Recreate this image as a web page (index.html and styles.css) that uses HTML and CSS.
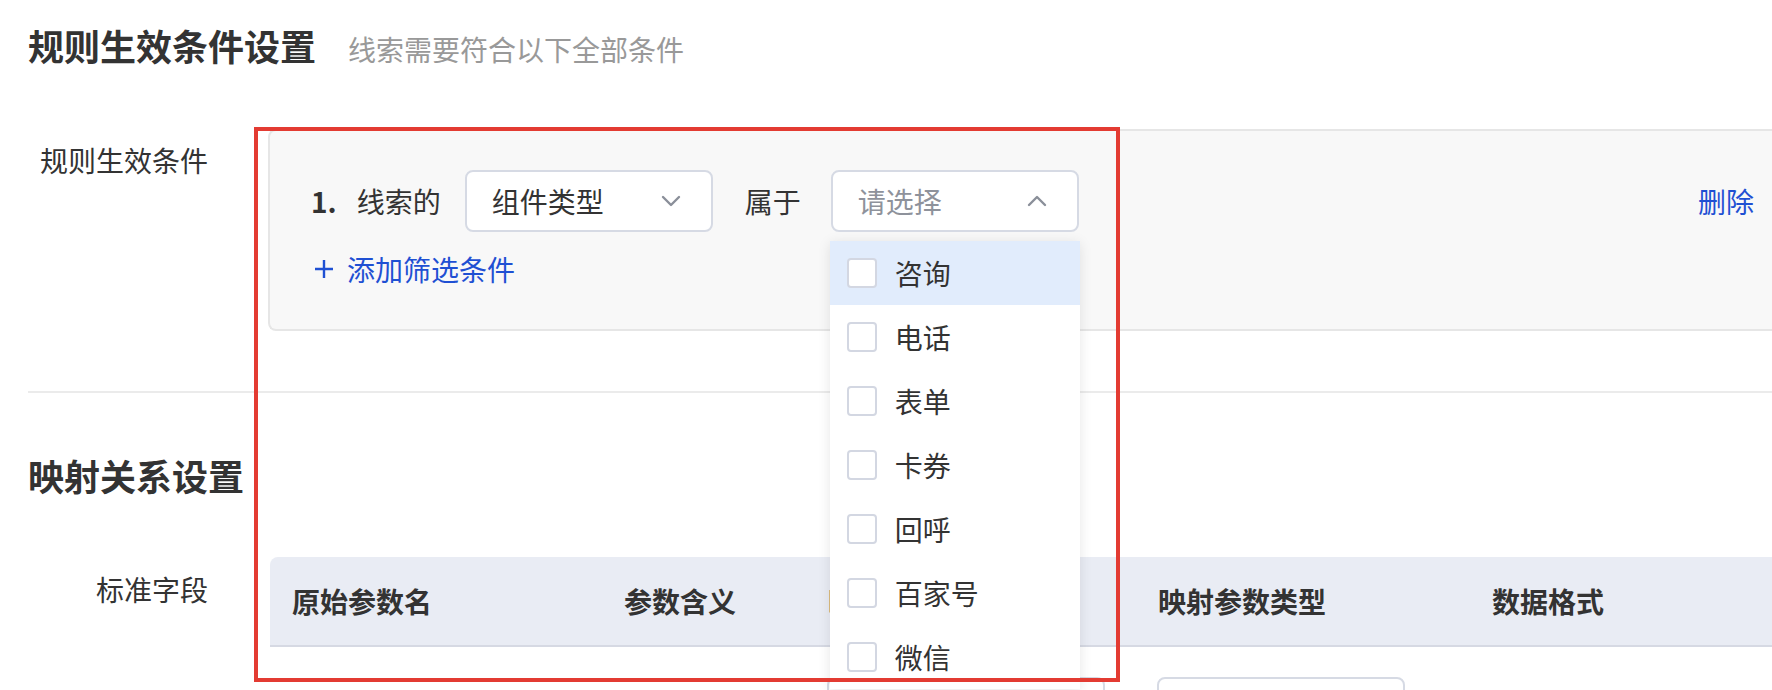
FILE: index.html
```html
<!DOCTYPE html>
<html lang="zh-CN">
<head>
    <meta charset="UTF-8">
    <title>规则生效条件设置</title>
    <link rel="stylesheet" href="styles.css">
</head>
<body>
    <div class="page">
        <!-- 规则生效条件 -->
        <div class="section-head">
            <h2>规则生效条件设置</h2>
            <span class="hint">线索需要符合以下全部条件</span>
        </div>

        <div class="form-row cond-row">
            <div class="form-label">规则生效条件</div>
            <div class="cond-box">
                <div class="cond-line">
                    <span class="cond-no">1.</span>
                    <span class="cond-text first">线索的</span>
                    <div class="select">
                        <span>组件类型</span>
                        <svg class="arrow" width="20" height="12" viewBox="0 0 20 12"><polyline points="2,2 10,10 18,2" fill="none" stroke="#8a8f99" stroke-width="2.4" stroke-linecap="round" stroke-linejoin="round"/></svg>
                    </div>
                    <span class="cond-text">属于</span>
                    <div class="select-wrap">
                        <div class="select open">
                            <span class="placeholder">请选择</span>
                            <svg class="arrow" width="20" height="12" viewBox="0 0 20 12"><polyline points="2,10 10,2 18,10" fill="none" stroke="#8a8f99" stroke-width="2.4" stroke-linecap="round" stroke-linejoin="round"/></svg>
                        </div>
                        <ul class="dropdown">
                            <li class="active"><span class="check"></span>咨询</li>
                            <li><span class="check"></span>电话</li>
                            <li><span class="check"></span>表单</li>
                            <li><span class="check"></span>卡券</li>
                            <li><span class="check"></span>回呼</li>
                            <li><span class="check"></span>百家号</li>
                            <li><span class="check"></span>微信</li>
                        </ul>
                    </div>
                    <a href="#" class="del-link">删除</a>
                </div>
                <a href="#" class="add-link">
                    <svg width="20" height="20" viewBox="0 0 20 20"><path d="M10 1v18M1 10h18" stroke="#1f50d3" stroke-width="2.4"/></svg>
                    添加筛选条件
                </a>
            </div>
        </div>

        <div class="divider"></div>

        <!-- 映射关系设置 -->
        <div class="section-head second">
            <h2>映射关系设置</h2>
        </div>

        <div class="form-row map-row">
            <div class="form-label">标准字段</div>
            <div class="map-table">
                <div class="thead">
                    <div>原始参数名</div>
                    <div>参数含义</div>
                    <div>映射参数名</div>
                    <div>映射参数类型</div>
                    <div>数据格式</div>
                </div>
                <div class="trow">
                    <div></div>
                    <div></div>
                    <div><div class="input wide"></div></div>
                    <div><div class="input"></div></div>
                    <div></div>
                </div>
            </div>
        </div>

        <!-- 标注框 -->
        <div class="mark"></div>
    </div>
</body>
</html>
```

FILE: styles.css
```css
* {
    margin: 0;
    padding: 0;
    box-sizing: border-box;
}

body {
    font-family: "Noto Sans CJK SC", "Noto Sans", sans-serif;
    color: #333;
    background: #fff;
    overflow: hidden;
}

ul {
    list-style: none;
}

a {
    text-decoration: none;
}

.page {
    position: relative;
    width: 1800px;
    height: 690px;
    padding: 20px 0 0 28px;
}

/* Section titles */
.section-head {
    display: flex;
    align-items: baseline;
    height: 50px;
    line-height: 50px;
}

.section-head h2 {
    font-size: 36px;
    font-weight: 700;
    color: #333;
}

.section-head .hint {
    margin-left: 32px;
    font-size: 28px;
    color: #999;
}

.section-head.second {
    margin-top: 57px;
}

/* Form rows */
.form-row {
    display: flex;
    gap: 60px;
}

.form-label {
    flex: 0 0 180px;
    text-align: right;
    font-size: 28px;
    line-height: 40px;
    color: #333;
}

.cond-row {
    margin-top: 59px;
}

.cond-row .form-label {
    padding-top: 11px;
}

.map-row {
    margin-top: 57px;
}

.map-row .form-label {
    padding-top: 12px;
}

/* Condition box */
.cond-box {
    flex: 1;
    background: #f8f8f8;
    border: 2px solid #e6e6e6;
    border-right: none;
    border-radius: 8px 0 0 8px;
    padding: 39px 46px 40px 41px;
}

.cond-line {
    display: flex;
    align-items: center;
    height: 62px;
    font-size: 28px;
}

.cond-no {
    font-weight: 700;
    margin-right: 20px;
}

.cond-text {
    margin-right: 30px;
}

.cond-text.first {
    margin-right: 24px;
}

.select {
    display: flex;
    align-items: center;
    justify-content: space-between;
    width: 248px;
    height: 62px;
    padding: 0 30px 0 25px;
    background: #fff;
    border: 2px solid #d6dae4;
    border-radius: 8px;
    margin-right: 32px;
}

.select .placeholder {
    color: #8e929b;
}

.select-wrap {
    position: relative;
}

.select-wrap .select {
    margin-right: 0;
}

.dropdown {
    position: absolute;
    top: 71px;
    left: -1px;
    width: 250px;
    background: #fff;
    box-shadow: 0 2px 12px rgba(0, 0, 0, 0.1);
    z-index: 10;
}

.dropdown li {
    display: flex;
    align-items: center;
    gap: 18px;
    height: 64px;
    padding-left: 17px;
    font-size: 28px;
    color: #333;
}

.dropdown li.active {
    background: #e1ecfc;
}

.check {
    width: 30px;
    height: 30px;
    background: #fff;
    border: 2px solid #d3d7e2;
    border-radius: 4px;
}

.del-link {
    margin-left: auto;
    color: #1f50d3;
    font-size: 28px;
}

.add-link {
    display: inline-flex;
    align-items: center;
    gap: 13px;
    margin-top: 17px;
    padding-left: 3px;
    line-height: 40px;
    font-size: 28px;
    color: #1f50d3;
}

.divider {
    margin-top: 60px;
    height: 2px;
    background: #ebebeb;
}

/* Mapping table */
.map-table {
    flex: 1;
    margin-left: 2px;
}

.thead,
.trow {
    display: grid;
    grid-template-columns: 332px 204px 330px 334px 1fr;
}

.thead {
    height: 90px;
    align-items: center;
    background: #e9ecf4;
    border-bottom: 2px solid #d6d9e3;
    border-radius: 8px 0 0 0;
    font-size: 28px;
    font-weight: 700;
    color: #333;
}

.thead div {
    padding-left: 22px;
}

.trow {
    padding-top: 30px;
}

.trow > div {
    padding-left: 21px;
}

.input {
    width: 248px;
    height: 62px;
    background: #fff;
    border: 2px solid #d6dae4;
    border-radius: 8px;
}

.input.wide {
    width: 278px;
}

/* Annotation */
.mark {
    position: absolute;
    left: 254px;
    top: 127px;
    width: 866px;
    height: 555px;
    border: 4px solid #e33b32;
    z-index: 20;
}
```
